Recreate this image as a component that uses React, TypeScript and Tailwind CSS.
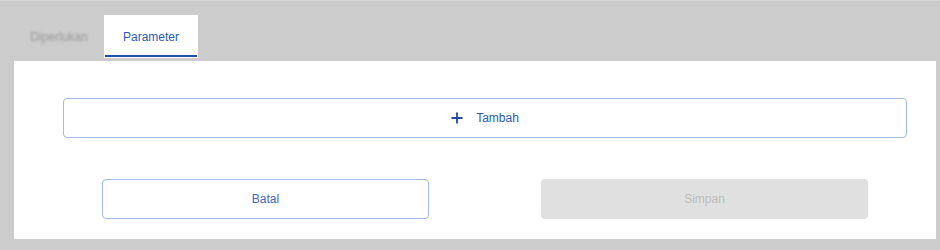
export default function App() {
  const font = { fontFamily: '"Liberation Sans", Arial, sans-serif' };
  return (
    <div
      className="w-[940px] h-[250px] bg-[#cccccc] border-t border-[#d8d8d8] text-[12px]"
      style={font}
    >
      <div className="flex pl-[14px] pt-[14px]">
        <div className="w-[90px] h-[43px] flex items-center justify-center">
          <span className="text-[#9a9a9a] blur-[1.2px]">Diperlukan</span>
        </div>
        <div className="relative w-[94px] h-[43px] bg-white flex items-center justify-center">
          <span className="text-[#2a5bb5]">Parameter</span>
          <div className="absolute left-[1px] right-[1px] bottom-[1px] h-[2px] bg-[#1f4fa8]" />
        </div>
      </div>
      <div className="ml-[14px] mt-[3px] w-[922px] h-[178px] bg-white pl-[49px] pr-[29px] pt-[37px]">
        <button className="w-full h-[40px] rounded-[4px] border border-[#a3b9e6] bg-white flex items-center justify-center gap-[13px] text-[#2a5bb5]">
          <svg width="12" height="12" viewBox="0 0 12 12">
            <path d="M6 0.5V11.5M0.5 6H11.5" stroke="#1d4b9e" strokeWidth="1.8" />
          </svg>
          <span>Tambah</span>
        </button>
        <div className="flex ml-[39px] mt-[41px] gap-[112px]">
          <button className="w-[327px] h-[40px] rounded-[4px] border border-[#a3b9e6] bg-white text-[#3e68c0]">
            Batal
          </button>
          <button className="w-[327px] h-[40px] rounded-[4px] bg-[#e0e0e0] text-[#bcbcbc]">
            Simpan
          </button>
        </div>
      </div>
    </div>
  );
}
